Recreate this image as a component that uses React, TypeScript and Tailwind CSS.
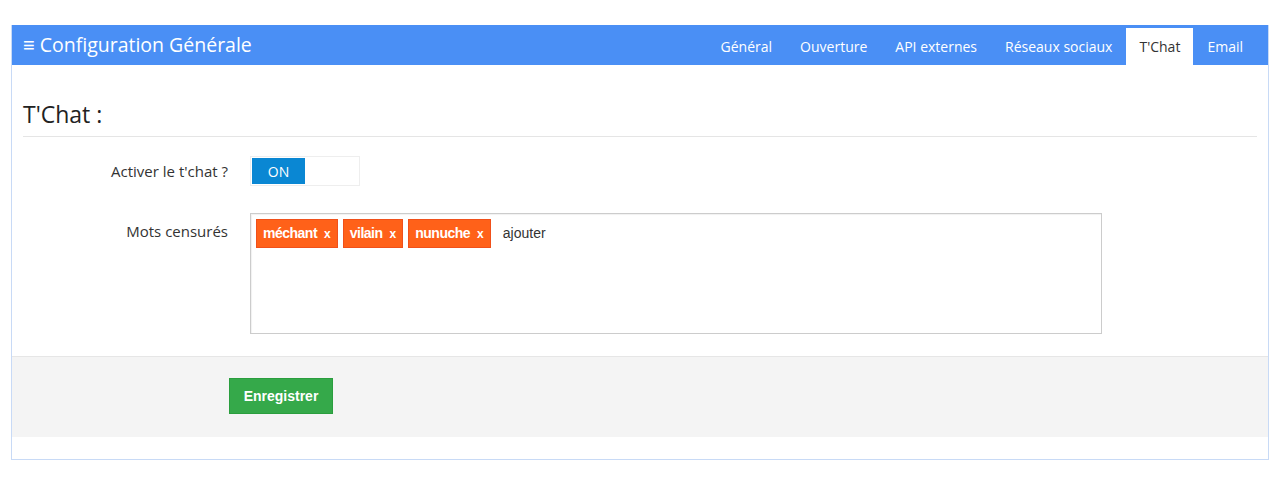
import React from "react";

const tabs = ["Général", "Ouverture", "API externes", "Réseaux sociaux", "T'Chat", "Email"];

function Tag({ label }: { label: string }) {
  return (
    <span className="inline-flex items-center h-[29px] px-[6px] bg-[#ff6119] border border-[#f0501a] text-white font-bold text-[14px] tracking-[-0.5px] font-['Liberation_Sans',Arial,sans-serif]">
      <span>{label}</span>
      <span className="ml-[7px] text-[12px] tracking-normal">x</span>
    </span>
  );
}

export default function App() {
  return (
    <div className="min-h-[478px] bg-white pt-[25px] px-[11px] font-['Open_Sans',sans-serif] text-[#333]">
      <div className="w-[1258px] border border-[#c8daf6] border-t-0">
        <div className="h-[40px] bg-[#4a8ff5] flex items-end justify-between pr-[11px]">
          <div className="self-center pl-[11px] text-white text-[19.5px] leading-none flex items-center">
            <span className="mr-[5px] text-[20px]">≡</span>
            <span>Configuration Générale</span>
          </div>
          <div className="flex items-end h-full">
            {tabs.map((t) => (
              <div
                key={t}
                className={
                  t === "T'Chat"
                    ? "h-[37px] px-[13px] bg-white text-[#333] text-[14px] flex items-center"
                    : "h-[37px] px-[14px] text-white text-[14px] flex items-center"
                }
              >
                {t}
              </div>
            ))}
          </div>
        </div>

        <div className="px-[11px] pt-[36px]">
          <h2 className="text-[23px] leading-[27px] text-[#222]">T'Chat :</h2>
          <div className="mt-[8px] border-t border-[#e5e5e5]" />
        </div>

        <div className="pt-[19px]">
          <div className="flex items-center">
            <div className="w-[216px] text-right text-[15px]">Activer le t'chat ?</div>
            <div className="ml-[22px] flex w-[110px] h-[30px] border border-[#eeeeee] p-px bg-white">
              <div className="w-[53px] h-full bg-[#0a87d3] text-white text-[14px] flex items-center justify-center">ON</div>
              <div className="flex-1" />
            </div>
          </div>

          <div className="flex items-start mt-[27px]">
            <div className="w-[216px] text-right text-[15px] pt-[7px]">Mots censurés</div>
            <div className="ml-[22px] w-[852px] h-[121px] border border-[#cccccc] shadow-[inset_1px_1px_1px_rgba(0,0,0,0.06)] p-[5px] flex items-start gap-[5px]">
              <Tag label="méchant" />
              <Tag label="vilain" />
              <Tag label="nunuche" />
              <span className="ml-[7px] h-[29px] flex items-center text-[14px] text-[#333] font-['Liberation_Sans',Arial,sans-serif]">ajouter</span>
            </div>
          </div>
        </div>

        <div className="mt-[22px] h-[81px] bg-[#f4f4f4] border-t border-[#e6e6e6] pt-[21px] pl-[217px]">
          <button className="w-[104px] h-[36px] bg-[#35a94a] border border-[#2a9e3e] text-white font-bold text-[14px] font-['Liberation_Sans',Arial,sans-serif]">
            Enregistrer
          </button>
        </div>
        <div className="h-[22px]" />
      </div>
    </div>
  );
}
